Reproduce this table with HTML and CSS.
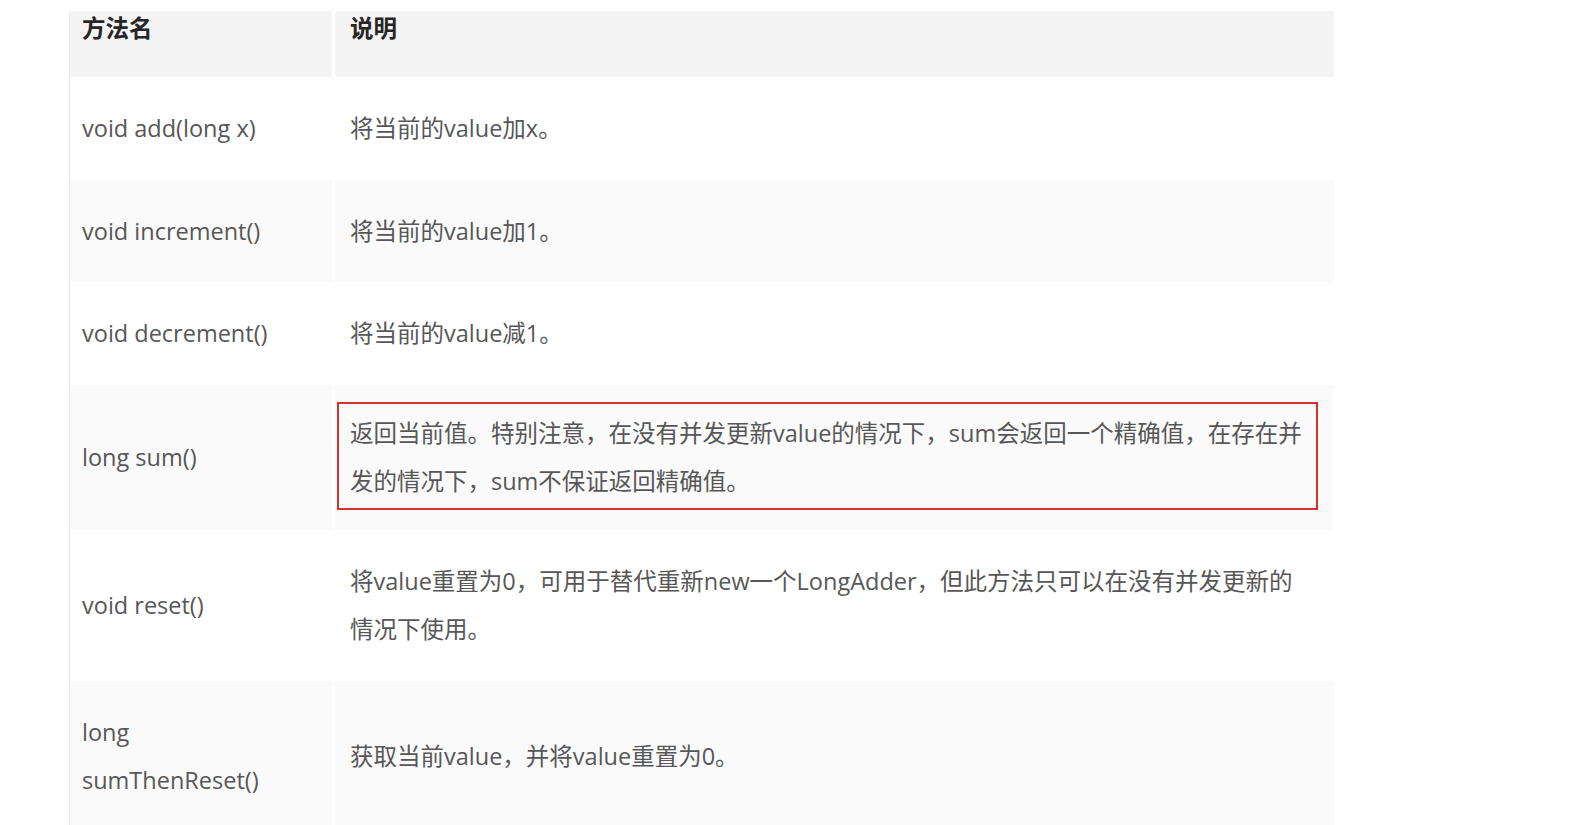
FILE: index.html
```html
<!DOCTYPE html>
<html lang="zh-CN">
<head>
<meta charset="utf-8">
<title>LongAdder 方法</title>
<link rel="stylesheet" href="styles.css">
</head>
<body>
<div class="page">
  <table class="methods">
    <colgroup>
      <col class="col-name">
      <col class="col-desc">
    </colgroup>
    <thead>
      <tr>
        <th>方法名</th>
        <th>说明</th>
      </tr>
    </thead>
    <tbody>
      <tr>
        <td>void add(long x)</td>
        <td>将当前的value加x。</td>
      </tr>
      <tr class="alt">
        <td>void increment()</td>
        <td>将当前的value加1。</td>
      </tr>
      <tr>
        <td>void decrement()</td>
        <td>将当前的value减1。</td>
      </tr>
      <tr class="alt tight">
        <td>long sum()</td>
        <td class="marked">返回当前值。特别注意，在没有并发更新value的情况下，sum会返回一个精确值，在存在并发的情况下，sum不保证返回精确值。<span class="mark"></span></td>
      </tr>
      <tr>
        <td>void reset()</td>
        <td>将value重置为0，可用于替代重新new一个LongAdder，但此方法只可以在没有并发更新的情况下使用。</td>
      </tr>
      <tr class="alt">
        <td>long sumThenReset()</td>
        <td>获取当前value，并将value重置为0。</td>
      </tr>
    </tbody>
  </table>
</div>
</body>
</html>
```

FILE: styles.css
```css
html, body {
  margin: 0;
  padding: 0;
  background: #ffffff;
}

body {
  font-family: "Open Sans", "Noto Sans CJK SC", sans-serif;
  font-size: 23.5px;
  color: #575757;
}

.page {
  padding: 11px 0 0 69px;
}

.methods {
  width: 1265px;
  border-collapse: collapse;
  table-layout: fixed;
  border-left: 1px solid #ececec;
}

.col-name {
  width: 264px;
}

.methods th,
.methods td {
  text-align: left;
  vertical-align: middle;
  border-right: 3px solid #ffffff;
}

.methods th:last-child,
.methods td:last-child {
  border-right: none;
}

.methods th {
  background: #f4f4f4;
  color: #262626;
  font-weight: 700;
  height: 66px;
  line-height: 34px;
  padding: 0;
  vertical-align: top;
}

.methods td {
  line-height: 48.5px;
  padding: 27px 26px 27px 15px;
}

.methods th:first-child,
.methods td:first-child {
  padding-left: 12px;
  padding-right: 24px;
}

.methods th:last-child {
  padding-left: 15px;
}

.methods tbody tr {
  background: #ffffff;
}

.methods tbody tr.alt {
  background: #fafafa;
}

.methods tbody tr.tight td {
  padding-top: 24px;
  padding-bottom: 24px;
}

.marked {
  position: relative;
}

.mark {
  position: absolute;
  left: 2px;
  right: 15px;
  top: 17px;
  bottom: 20px;
  border: 2px solid #d8322c;
  pointer-events: none;
}
```
